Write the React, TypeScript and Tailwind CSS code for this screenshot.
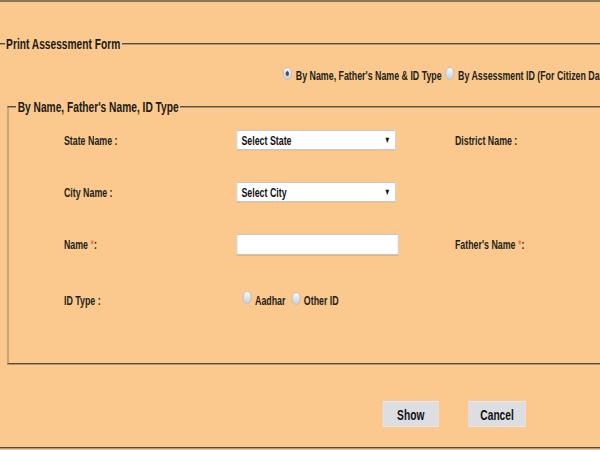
import React from "react";

function Radio({ checked = false }: { checked?: boolean }) {
  return (
    <span className="relative inline-block w-[13px] h-[13px] rounded-full border border-[#b4bcc6] bg-gradient-to-b from-[#f7f9fb] to-[#c9d1da] shrink-0 -mt-[5px]">
      {checked && (
        <span className="absolute left-[3px] top-[3px] w-[5px] h-[5px] rounded-full bg-[#4a4f57]" />
      )}
    </span>
  );
}

function SelectBox({ text }: { text: string }) {
  return (
    <div className="w-[234px] h-[20px] bg-white border border-[#c6c6c6] shadow-[0_1px_1px_rgba(0,0,0,0.12)] flex items-center justify-between pl-[6px] pr-[7px]">
      <span className="text-[13px] text-[#111]">{text}</span>
      <span className="text-[9px] text-[#111]">▼</span>
    </div>
  );
}

function Req() {
  return <span className="text-[#e2563f] font-normal">*</span>;
}

export default function App() {
  return (
    <div className="w-[600px] h-[450px] overflow-hidden bg-[#fbc98e]">
      <div className="w-[900px] h-[450px] origin-top-left scale-x-[0.68] border-t-2 border-[#8a7658] font-['Liberation_Sans',Arial,sans-serif] font-bold text-[13px] leading-[15px] text-[#221f1b]">
        <fieldset className="mt-[34px] -ml-[2px] border-2 [border-style:groove] border-[#a89878] pl-[7px] pr-0 pb-[20px]">
          <legend className="px-[2px] text-[15px] leading-[15px] text-[#1c1a17]">Print Assessment Form</legend>

          <div className="mt-[17px] pl-[409px] flex items-center whitespace-nowrap">
            <Radio checked />
            <span className="ml-[6px]">By Name, Father's Name &amp; ID Type</span>
            <span className="ml-[5px]"><Radio /></span>
            <span className="ml-[6px]">By Assessment ID (For Citizen Data)</span>
          </div>

          <fieldset className="mt-[16px] ml-[4px] border-2 [border-style:groove] border-[#a89878] pl-[11px] pb-[53px]">
            <legend className="px-[2px] text-[15px] leading-[15px] text-[#1c1a17]">By Name, Father's Name, ID Type</legend>

            <div className="pl-[70px] flex flex-col">
              <div className="mt-[16px] h-[20px] grid grid-cols-[254px_321px_1fr] items-center">
                <span>State Name :</span>
                <SelectBox text="Select State" />
                <span>District Name :</span>
              </div>
              <div className="mt-[32px] h-[20px] grid grid-cols-[254px_321px_1fr] items-center">
                <span>City Name :</span>
                <SelectBox text="Select City" />
                <span />
              </div>
              <div className="mt-[32px] h-[20px] grid grid-cols-[254px_321px_1fr] items-center">
                <span>
                  Name <Req />:
                </span>
                <div className="w-[238px] h-[21px] bg-white border border-[#c6c6c6] shadow-[0_1px_1px_rgba(0,0,0,0.12)]" />
                <span>
                  Father's Name <Req />:
                </span>
              </div>
              <div className="mt-[36px] h-[20px] grid grid-cols-[254px_321px_1fr] items-center">
                <span>ID Type :</span>
                <div className="flex items-center pl-[9px] whitespace-nowrap">
                  <Radio />
                  <span className="ml-[5px]">Aadhar</span>
                  <span className="ml-[9px]"><Radio /></span>
                  <span className="ml-[5px]">Other ID</span>
                </div>
                <span />
              </div>
            </div>
          </fieldset>

          <div className="mt-[36px] pl-[556px] flex items-center gap-[44px]">
            <button className="w-[82px] h-[26px] bg-[#dcdee1] border border-[#e6e7ea] text-[15px] text-[#111] font-bold">Show</button>
            <button className="w-[84px] h-[26px] bg-[#dcdee1] border border-[#e6e7ea] text-[15px] text-[#111] font-bold">Cancel</button>
          </div>
        </fieldset>
      </div>
    </div>
  );
}
